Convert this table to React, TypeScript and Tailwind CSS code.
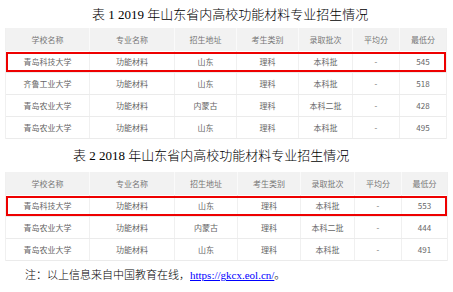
const cols1 = ["w-[84px]", "w-[85px]", "w-[62px]", "w-[62px]", "w-[54px]", "w-[47px]", "w-[46px]"];
const cols2 = ["w-[84px]", "w-[85px]", "w-[63px]", "w-[63px]", "w-[54px]", "w-[47px]", "w-[45px]"];

const header = ["学校名称", "专业名称", "招生地址", "考生类别", "录取批次", "平均分", "最低分"];

const rows2019 = [
  ["青岛科技大学", "功能材料", "山东", "理科", "本科批", "-", "545"],
  ["齐鲁工业大学", "功能材料", "山东", "理科", "本科批", "-", "518"],
  ["青岛农业大学", "功能材料", "内蒙古", "理科", "本科二批", "-", "428"],
  ["青岛农业大学", "功能材料", "山东", "理科", "本科批", "-", "495"],
];

const rows2018 = [
  ["青岛科技大学", "功能材料", "山东", "理科", "本科批", "-", "553"],
  ["青岛农业大学", "功能材料", "内蒙古", "理科", "本科二批", "-", "444"],
  ["青岛农业大学", "功能材料", "山东", "理科", "本科批", "-", "491"],
];

const cellFont = { fontFamily: '"Noto Sans CJK SC", "Noto Sans", sans-serif' };

function Row({ cells, cols, head, highlight }: { cells: string[]; cols: string[]; head?: boolean; highlight?: boolean }) {
  return (
    <div className={`relative flex ${head ? "h-[23px] bg-[#f2f2f2] text-[#777]" : "h-[22px] border-b border-[#ebebeb] text-[#666]"}`}>
      {cells.map((c, i) => (
        <div
          key={i}
          className={`${cols[i]} flex items-center justify-center text-[8px] leading-none ${i < cells.length - 1 ? (head ? "border-r border-[#fafafa]" : "border-r border-[#f0f0f0]") : ""}`}
        >
          {c}
        </div>
      ))}
      {highlight && <div className="absolute inset-x-0 top-[1px] bottom-[0px] border-2 border-[#ee0000]" />}
    </div>
  );
}

function Table({ rows, cols }: { rows: string[][]; cols: string[] }) {
  return (
    <div className="ml-[5px] w-fit border-x border-[#f0f0f0]" style={cellFont}>
      <Row cells={header} cols={cols} head />
      {rows.map((r, i) => (
        <Row key={i} cells={r} cols={cols} highlight={i === 0} />
      ))}
    </div>
  );
}

const titleFont = { fontFamily: '"Liberation Serif", "Noto Sans CJK SC", serif' };

export default function App() {
  return (
    <div className="w-[453px] h-[292px] bg-white overflow-hidden">
      <div className="h-[28px] flex items-center pl-[92px] pt-[2px] text-[13px] font-light text-black" style={titleFont}>
        表 1 2019 年山东省内高校功能材料专业招生情况
      </div>
      <Table rows={rows2019} cols={cols1} />
      <div className="h-[33px] flex items-center pl-[73px] pt-[1px] text-[13px] font-light text-black" style={titleFont}>
        表 2 2018 年山东省内高校功能材料专业招生情况
      </div>
      <Table rows={rows2018} cols={cols2} />
      <div className="h-[29px] flex items-center pl-[25px] text-[11px] font-light text-black" style={titleFont}>
        注：以上信息来自中国教育在线，
        <a href="#" className="text-[#0000ff] underline">https://gkcx.eol.cn/</a>。
      </div>
    </div>
  );
}
